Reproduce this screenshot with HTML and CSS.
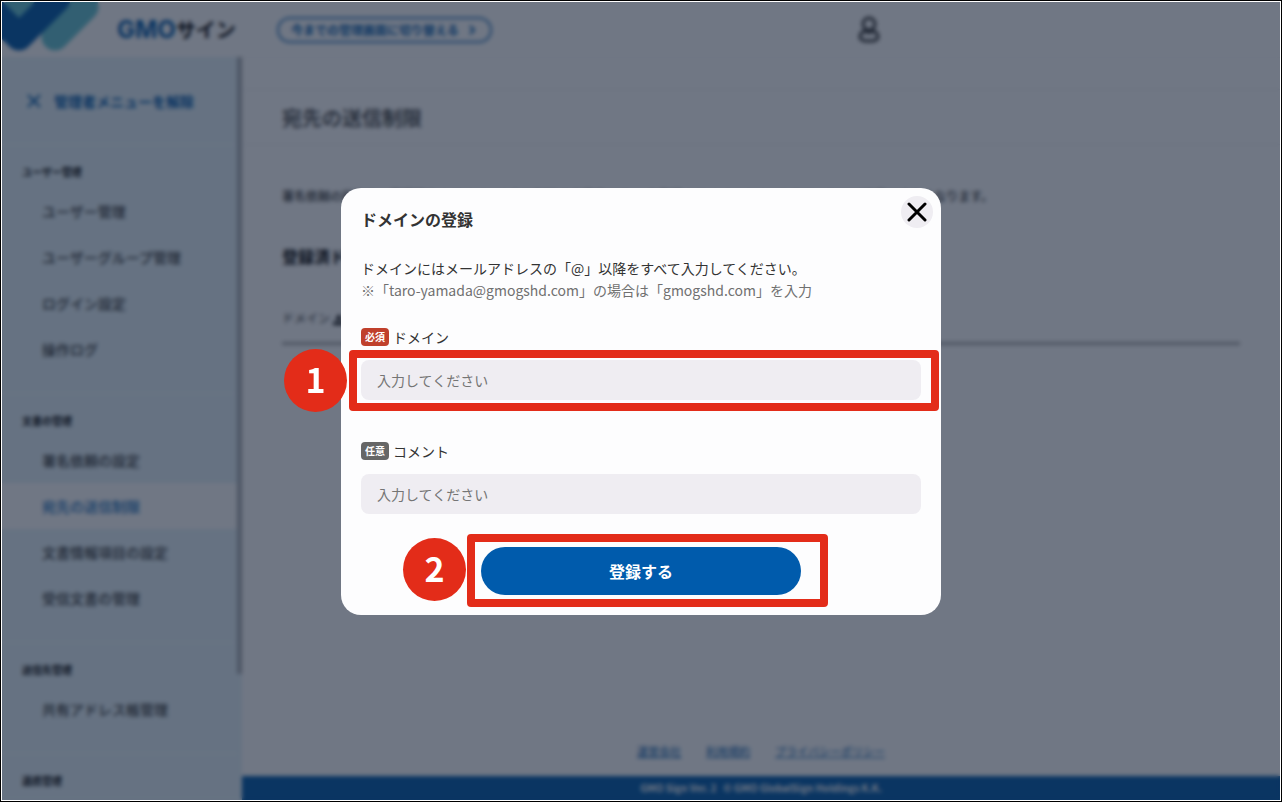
FILE: index.html
```html
<!DOCTYPE html>
<html lang="ja">
<head>
    <meta charset="UTF-8">
    <meta name="viewport" content="width=device-width, initial-scale=1.0">
    <title>宛先の送信制限</title>
    <link rel="stylesheet" href="styles.css">
</head>
<body>
    <div class="app">
        <header class="header">
            <svg class="header__mark" viewBox="0 0 100 55" aria-hidden="true">
                <path d="M2 2L4 0H36L18 22Z" fill="#64c4d2"/>
                <path d="M53 35L83 5" stroke="#64c4d2" stroke-width="27" stroke-linecap="round"/>
                <path d="M-10 8L17 35L55 -3" fill="none" stroke="#005aaa" stroke-width="27" stroke-linecap="round" stroke-linejoin="round"/>
            </svg>
            <p class="logo"><span class="logo__gmo">GMO</span>サイン</p>
            <button class="switch" type="button">
                今までの管理画面に切り替える
                <svg width="6" height="10" viewBox="0 0 6 10" aria-hidden="true"><path d="M1 1L5 5L1 9" fill="none" stroke="#005aaa" stroke-width="2"/></svg>
            </button>
            <div class="user">
                <svg width="22" height="27" viewBox="0 0 22 27" aria-hidden="true">
                    <circle cx="11" cy="8" r="6" fill="none" stroke="#333" stroke-width="3"/>
                    <path d="M7 15C4 16 2 18 2 21C2 24 5 25 11 25S20 24 20 21C20 18 18 16 15 15C13 17 9 17 7 15Z" fill="none" stroke="#333" stroke-width="3"/>
                </svg>
            </div>
        </header>

        <div class="body">
            <aside class="sidebar">
                <nav class="menu">
                    <a class="menu__close" href="#">
                        <svg width="14" height="14" viewBox="0 0 14 14" aria-hidden="true"><path d="M1 1L13 13M13 1L1 13" stroke="#005aaa" stroke-width="2"/></svg>
                        管理者メニューを解除
                    </a>
                    <section class="menu__group">
                        <h2 class="menu__title">ユーザー管理</h2>
                        <a class="menu__item" href="#">ユーザー管理</a>
                        <a class="menu__item" href="#">ユーザーグループ管理</a>
                        <a class="menu__item" href="#">ログイン設定</a>
                        <a class="menu__item" href="#">操作ログ</a>
                    </section>
                    <section class="menu__group">
                        <h2 class="menu__title">文書の管理</h2>
                        <a class="menu__item" href="#">署名依頼の設定</a>
                        <a class="menu__item menu__item--active" href="#">宛先の送信制限</a>
                        <a class="menu__item" href="#">文書情報項目の設定</a>
                        <a class="menu__item" href="#">受信文書の管理</a>
                    </section>
                    <section class="menu__group">
                        <h2 class="menu__title">送信先管理</h2>
                        <a class="menu__item" href="#">共有アドレス帳管理</a>
                    </section>
                    <section class="menu__group">
                        <h2 class="menu__title">連携管理</h2>
                    </section>
                </nav>
                <div class="scrollbar"></div>
            </aside>

            <main class="main">
                <div class="main__strip"></div>
                <h1 class="main__title">宛先の送信制限</h1>
                <div class="content">
                    <p class="content__lead">署名依頼の宛先を、登録済みのドメインのみに制限する設定です。&nbsp; 未登録のドメインのメールアドレスには送信できなくなります。</p>
                    <h2 class="content__title">登録済ドメイン</h2>
                    <table class="table">
                        <thead>
                            <tr>
                                <th>
                                    ドメイン
                                    <svg class="table__sort" width="12" height="12" viewBox="0 0 12 12" aria-hidden="true"><path d="M6 0L10 6H2ZM0 8H12V11H0Z" fill="#000"/></svg>
                                </th>
                            </tr>
                        </thead>
                    </table>
                </div>
                <footer class="footer">
                    <div class="footer__links">
                        <a href="#">運営会社</a>
                        <a href="#">利用規約</a>
                        <a href="#">プライバシーポリシー</a>
                    </div>
                    <p class="footer__copy">GMO Sign Ver. 2 &nbsp; © GMO GlobalSign Holdings K.K.</p>
                </footer>
            </main>
        </div>

        <div class="overlay">
            <form class="modal" role="dialog" aria-labelledby="modal-title">
                <button class="modal__close" type="button" aria-label="閉じる">
                    <svg width="20" height="20" viewBox="0 0 20 20" aria-hidden="true"><path d="M2 2L18 18M18 2L2 18" stroke="#000" stroke-width="3" stroke-linecap="round"/></svg>
                </button>
                <h2 class="modal__title" id="modal-title">ドメインの登録</h2>
                <p class="modal__text">ドメインにはメールアドレスの「@」以降をすべて入力してください。</p>
                <p class="modal__text modal__text--note">※「taro-yamada@gmogshd.com」の場合は「gmogshd.com」を入力</p>

                <div class="field">
                    <label class="field__label" for="domain"><span class="tag tag--required">必須</span>ドメイン</label>
                    <div class="field__control">
                        <input class="input" id="domain" type="text" placeholder="入力してください">
                        <span class="frame frame--domain"></span>
                        <span class="step step--domain">1</span>
                    </div>
                </div>
                <div class="field">
                    <label class="field__label" for="comment"><span class="tag">任意</span>コメント</label>
                    <div class="field__control">
                        <input class="input" id="comment" type="text" placeholder="入力してください">
                    </div>
                </div>

                <div class="submit">
                    <button class="submit__button" type="submit">登録する</button>
                    <span class="frame frame--submit"></span>
                    <span class="step step--submit">2</span>
                </div>
            </form>
        </div>
    </div>
</body>
</html>
```
FILE: styles.css
```css
* {
    box-sizing: border-box;
}

body {
    margin: 0;
    padding: 1px;
    height: 100vh;
    border: 1px solid #000;
    background: #fff;
    color: #333;
    font-family: "Noto Sans CJK JP", sans-serif;
    font-size: 14px;
}

h1, h2, p {
    margin: 0;
}

a {
    color: inherit;
    text-decoration: none;
}

button, input {
    font-family: inherit;
}

.app {
    position: relative;
    display: flex;
    flex-direction: column;
    height: 100%;
    overflow: hidden;
}

/* header */

.header {
    display: flex;
    align-items: center;
    height: 55px;
    flex-shrink: 0;
}

.header__mark {
    width: 100px;
    height: 55px;
}

.logo {
    display: flex;
    align-items: center;
    width: 160px;
    margin-left: 15px;
    color: #000;
    font-size: 20px;
    font-weight: 700;
    line-height: 24px;
}

.logo__gmo {
    color: #005aaa;
    font-family: Inter, sans-serif;
    font-size: 24px;
}

.switch {
    display: flex;
    align-items: center;
    gap: 10px;
    height: 26px;
    padding: 0 15px 0 12px;
    border: 2px solid #3a80c0;
    border-radius: 13px;
    background: none;
    color: #005aaa;
    font-size: 12px;
    font-weight: 700;
}

.user {
    display: flex;
    width: 33%;
    margin-left: auto;
}

/* sidebar */

.body {
    display: flex;
    flex: 1;
    min-height: 0;
}

.sidebar {
    display: flex;
    width: 240px;
    flex-shrink: 0;
    overflow: hidden;
    background: #e6f3fa;
}

.menu {
    flex: 1;
}

.scrollbar {
    width: 5px;
    height: 83%;
    background: #a8adb2;
}

.menu__close {
    display: flex;
    align-items: center;
    gap: 13px;
    height: 87px;
    padding-left: 25px;
    color: #005aaa;
    font-weight: 700;
}

.menu__group {
    padding: 17px 0 21px;
    border-top: 1px solid #f6fcff;
}

.menu__title {
    margin-bottom: 6px;
    padding-left: 20px;
    color: #000;
    font-size: 10px;
    font-weight: 700;
    line-height: 20px;
}

.menu__item {
    display: block;
    padding-left: 40px;
    font-weight: 500;
    line-height: 46px;
}

.menu__item--active {
    background: #fff;
    color: #1a6fba;
}

/* main */

.main {
    display: flex;
    flex: 1;
    flex-direction: column;
}

.main__strip {
    height: 33px;
    border-top: 1px solid #f6f6f8;
    border-bottom: 1px solid #f0f0f2;
}

.main__title {
    padding: 2px 0 0 40px;
    border-bottom: 1px solid #f0f0f2;
    font-size: 20px;
    font-weight: 500;
    line-height: 52px;
}

.content {
    flex: 1;
    padding: 41px 40px 0;
}

.content__lead {
    margin-bottom: 38px;
    font-size: 12px;
    font-weight: 500;
    line-height: 20px;
}

.content__title {
    margin-bottom: 40px;
    color: #000;
    font-size: 16px;
    font-weight: 700;
    line-height: 24px;
}

.table {
    width: 100%;
    border-collapse: collapse;
}

.table th {
    padding: 0 0 14px;
    border-bottom: 3px solid #aaa;
    font-size: 12px;
    font-weight: 400;
    line-height: 20px;
    text-align: left;
}

.table__sort {
    vertical-align: middle;
}

.footer__links {
    display: flex;
    justify-content: center;
    gap: 25px;
    margin-bottom: 15px;
    color: #005aaa;
    font-size: 11px;
    line-height: 20px;
}

.footer__links a {
    text-decoration: underline;
}

.footer__copy {
    background: #005aaa;
    color: #fff;
    font-size: 10px;
    font-weight: 700;
    line-height: 24px;
    text-align: center;
}

/* modal */

.overlay {
    position: absolute;
    inset: 0;
    display: flex;
    align-items: center;
    justify-content: center;
    background: rgba(17, 28, 50, 0.6);
    backdrop-filter: blur(2px);
}

.modal {
    position: relative;
    width: 600px;
    padding: 20px;
    border-radius: 20px;
    background: #fdfdfe;
}

.modal__close {
    position: absolute;
    top: 8px;
    right: 8px;
    display: flex;
    align-items: center;
    justify-content: center;
    width: 32px;
    height: 32px;
    padding: 0;
    border: none;
    border-radius: 50%;
    background: #efedf2;
    cursor: pointer;
}

.modal__title {
    margin-bottom: 27px;
    font-size: 16px;
    font-weight: 700;
    line-height: 22px;
}

.modal__text {
    line-height: 22px;
}

.modal__text--note {
    margin-bottom: 27px;
    color: #707070;
}

.field {
    margin-bottom: 42px;
}

.field__label {
    display: flex;
    align-items: center;
    gap: 4px;
    height: 18px;
    margin-bottom: 14px;
}

.tag {
    width: 28px;
    border-radius: 4px;
    background: #666;
    color: #fff;
    font-size: 10px;
    font-weight: 700;
    line-height: 18px;
    text-align: center;
}

.tag--required {
    background: #c0402c;
}

.field__control {
    position: relative;
}

.input {
    display: block;
    width: 100%;
    height: 40px;
    padding: 0 16px;
    border: none;
    border-radius: 8px;
    background: #efedf2;
    font-size: 14px;
}

.input::placeholder {
    color: #757575;
}

.submit {
    position: relative;
    width: 320px;
    margin: -9px auto 0;
}

.submit__button {
    display: block;
    width: 100%;
    height: 48px;
    border: none;
    border-radius: 24px;
    background: #005bac;
    color: #fff;
    font-size: 16px;
    font-weight: 700;
    cursor: pointer;
}

/* numbered steps */

.frame {
    position: absolute;
    border: 8px solid #e32c19;
    border-radius: 4px;
    pointer-events: none;
}

.frame--domain {
    inset: -10px -18px -11px -12px;
}

.frame--submit {
    inset: -13px -27px -12px -14px;
}

.step {
    position: absolute;
    width: 63px;
    height: 63px;
    border-radius: 50%;
    background: #e32c19;
    color: #fff;
    font-size: 34px;
    font-weight: 700;
    line-height: 60px;
    text-align: center;
}

.step--domain {
    top: -11px;
    left: -77px;
}

.step--submit {
    top: -9px;
    left: -78px;
}
```
